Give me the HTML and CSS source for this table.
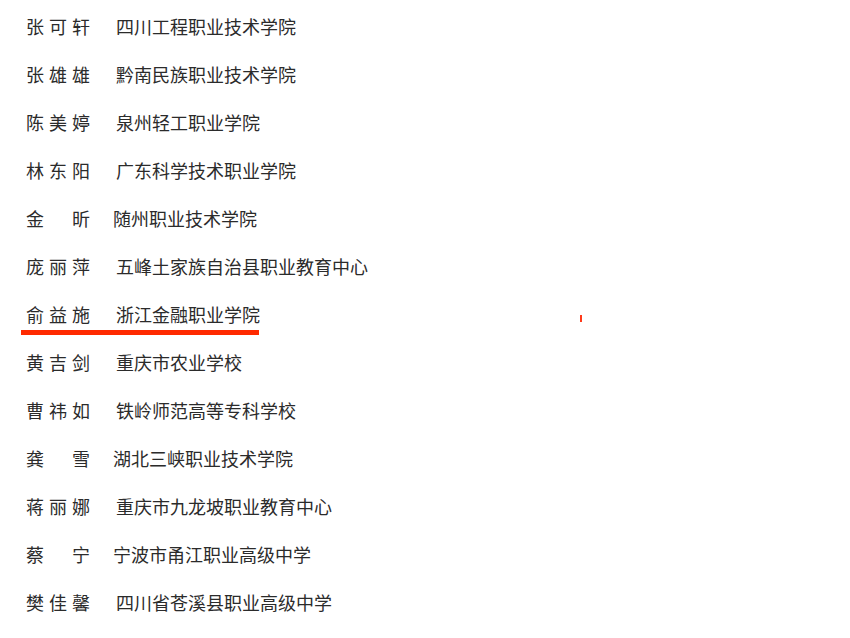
FILE: index.html
```html
<!DOCTYPE html>
<html lang="zh-CN">
<head>
<meta charset="utf-8">
<title>名单</title>
<link rel="stylesheet" href="styles.css">
</head>
<body>
<div class="list">
  <div class="row"><span class="name"><i>张</i><i>可</i><i>轩</i></span><span class="school">四川工程职业技术学院</span></div>
  <div class="row"><span class="name"><i>张</i><i>雄</i><i>雄</i></span><span class="school">黔南民族职业技术学院</span></div>
  <div class="row"><span class="name"><i>陈</i><i>美</i><i>婷</i></span><span class="school">泉州轻工职业学院</span></div>
  <div class="row"><span class="name"><i>林</i><i>东</i><i>阳</i></span><span class="school">广东科学技术职业学院</span></div>
  <div class="row two"><span class="name"><i>金</i><i>昕</i></span><span class="school">随州职业技术学院</span></div>
  <div class="row"><span class="name"><i>庞</i><i>丽</i><i>萍</i></span><span class="school">五峰土家族自治县职业教育中心</span></div>
  <div class="row marked"><span class="mark-wrap"><span class="name"><i>俞</i><i>益</i><i>施</i></span><span class="school">浙江金融职业学院</span></span><span class="tick"></span></div>
  <div class="row"><span class="name"><i>黄</i><i>吉</i><i>剑</i></span><span class="school">重庆市农业学校</span></div>
  <div class="row"><span class="name"><i>曹</i><i>祎</i><i>如</i></span><span class="school">铁岭师范高等专科学校</span></div>
  <div class="row two"><span class="name"><i>龚</i><i>雪</i></span><span class="school">湖北三峡职业技术学院</span></div>
  <div class="row"><span class="name"><i>蒋</i><i>丽</i><i>娜</i></span><span class="school">重庆市九龙坡职业教育中心</span></div>
  <div class="row two"><span class="name"><i>蔡</i><i>宁</i></span><span class="school">宁波市甬江职业高级中学</span></div>
  <div class="row"><span class="name"><i>樊</i><i>佳</i><i>馨</i></span><span class="school">四川省苍溪县职业高级中学</span></div>
</div>
</body>
</html>
```

FILE: styles.css
```css
html, body {
  margin: 0;
  padding: 0;
  background: #ffffff;
}

body {
  font-family: "Noto Sans CJK SC", "Microsoft YaHei", sans-serif;
  font-size: 18px;
  color: #2b2b2b;
  width: 850px;
  height: 638px;
  overflow: hidden;
}

.list {
  display: flex;
  flex-direction: column;
  padding: 2px 0 0 26px;
}

.row {
  position: relative;
  display: flex;
  align-items: center;
  height: 48px;
  line-height: 48px;
  white-space: nowrap;
}

.name {
  display: flex;
  justify-content: space-between;
  width: 64px;
  flex: none;
}

.name i {
  font-style: normal;
  width: 18px;
  text-align: center;
}

.school {
  margin-left: 26px;
}

.two .school {
  margin-left: 23px;
}

.mark-wrap {
  position: relative;
  display: flex;
  align-items: center;
}

.mark-wrap::after {
  content: "";
  position: absolute;
  left: -5px;
  right: 1px;
  bottom: 3px;
  height: 5px;
  background: #ff2a00;
}

.tick {
  position: absolute;
  left: 554px;
  top: 25px;
  width: 2px;
  height: 7px;
  background: #ff3a1a;
}
```
